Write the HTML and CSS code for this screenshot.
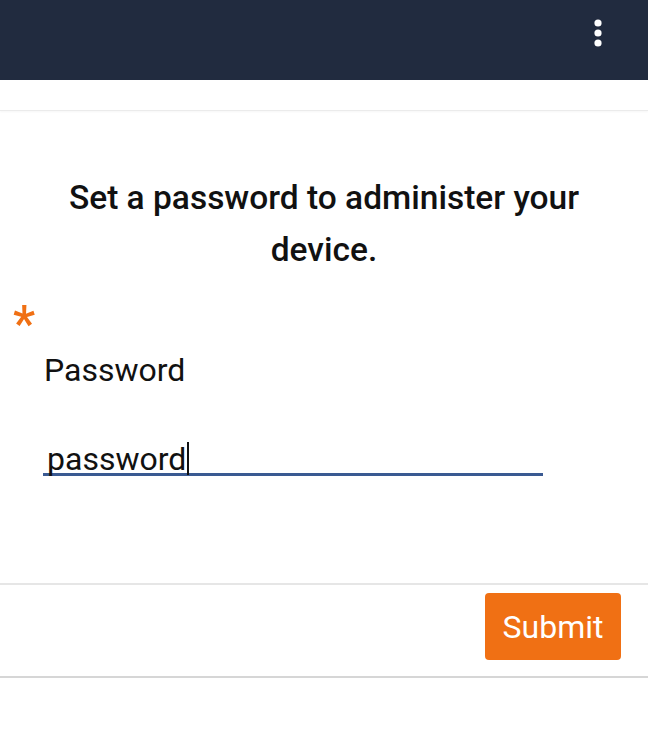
FILE: index.html
```html
<!DOCTYPE html>
<html>
<head>
<meta charset="utf-8">
<link rel="stylesheet" href="styles.css">
</head>
<body>
<header class="topbar">
  <button class="menu" aria-label="More options">
    <svg width="10" height="28" viewBox="0 0 10 28"><circle cx="5" cy="4" r="3.6" fill="#fff"/><circle cx="5" cy="14" r="3.6" fill="#fff"/><circle cx="5" cy="24" r="3.6" fill="#fff"/></svg>
  </button>
</header>
<div class="strip"></div>
<main class="card">
  <section class="body">
    <h1 class="title">Set a password to administer your device.</h1>
    <div class="field">
      <span class="req">*</span>
      <label class="label">Password</label>
      <div class="input"><span class="value">password</span><span class="caret"></span></div>
    </div>
  </section>
  <footer class="actions">
    <button class="submit">Submit</button>
  </footer>
</main>
</body>
</html>
```
FILE: styles.css
```css
html, body { margin: 0; padding: 0; background: #fff; }
body { font-family: Roboto, "Noto Sans", "Liberation Sans", sans-serif; color: #111; width: 648px; }

.topbar {
  height: 80px;
  background: #212b3f;
  display: flex;
  justify-content: flex-end;
  align-items: flex-start;
}
.menu {
  background: none; border: 0; padding: 0;
  margin: 19px 45px 0 0;
  width: 10px; height: 28px;
  display: block;
}
.menu svg { display: block; }

.strip {
  height: 30px;
  border-bottom: 1px solid #ececec;
  box-shadow: 0 1px 2px rgba(0,0,0,0.04);
}

.card {
  display: flex; flex-direction: column;
  border-bottom: 2px solid #d6d6d6;
  box-shadow: 0 1px 2px rgba(0,0,0,0.08);
}
.body { padding: 61px 0 0 0; height: 472px; box-sizing: border-box; }
.title {
  margin: 0 auto;
  width: 580px;
  text-align: center;
  font-size: 33.5px;
  font-weight: 500;
  line-height: 52px;
  color: #111;
}
.field { position: relative; padding: 30px 0 0 43px; }
.req {
  position: absolute; left: 13px; top: 23px;
  color: #f07014; font-size: 50px; line-height: 1;
  font-weight: 500;
}
.label { display: block; font-size: 32px; line-height: 36px; padding: 46px 0 0 1px; color: #111; }
.input {
  width: 500px;
  margin-top: 50px;
  height: 38px;
  box-sizing: border-box;
  padding-top: 5px;
  border-bottom: 3px solid #3a5a92;
  display: flex; align-items: flex-start;
}
.value { font-size: 32px; line-height: 33px; padding-left: 4px; color: #111; }
.caret { width: 2px; height: 33px; background: #111; margin-top: -1px; margin-left: 1px; }

.actions {
  border-top: 2px solid #e6e6e6;
  display: flex; justify-content: flex-end;
  padding: 8px 27px 16px 0;
}
.submit {
  background: #f07014; color: #fff; border: 0; border-radius: 4px;
  width: 136px; height: 67px;
  font-family: inherit; font-size: 32px; font-weight: 400;
}
```
